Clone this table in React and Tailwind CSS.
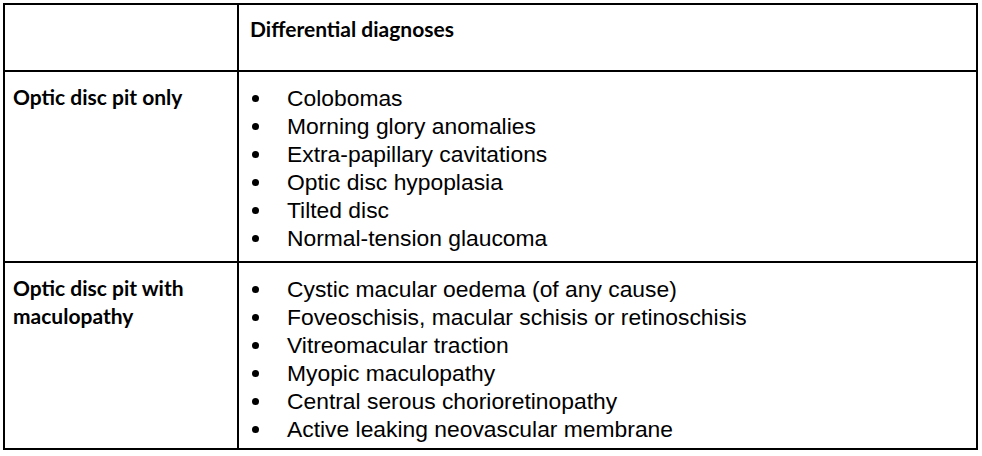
const rows = [
  {
    label: ["Optic disc pit only"],
    items: [
      "Colobomas",
      "Morning glory anomalies",
      "Extra-papillary cavitations",
      "Optic disc hypoplasia",
      "Tilted disc",
      "Normal-tension glaucoma",
    ],
    height: "h-[191px] border-b-2",
  },
  {
    label: ["Optic disc pit with", "maculopathy"],
    items: [
      "Cystic macular oedema (of any cause)",
      "Foveoschisis, macular schisis or retinoschisis",
      "Vitreomacular traction",
      "Myopic maculopathy",
      "Central serous chorioretinopathy",
      "Active leaking neovascular membrane",
    ],
    height: "h-[185px]",
  },
];

function BulletList({ items }) {
  return (
    <ul className="pt-[12px] font-['Liberation_Sans',Arial,sans-serif] text-[22.85px] leading-[28px] text-black">
      {items.map((item) => (
        <li key={item} className="flex items-center">
          <span className="flex w-[48px] pl-[13px]">
            <span className="h-[7px] w-[7px] rounded-full bg-black" />
          </span>
          <span>{item}</span>
        </li>
      ))}
    </ul>
  );
}

export default function App() {
  return (
    <div className="h-[456px] w-[982px] bg-white pl-[3px] pt-[3px]">
      <div className="w-[975px] border-2 border-black font-['Lato','Liberation_Sans',sans-serif]">
        <div className="flex h-[67px] border-b-2 border-black">
          <div className="w-[234px] border-r-2 border-black" />
          <div className="flex-1 pl-[11px] pt-[10px] text-[21px] font-bold leading-[28px] text-black">
            Differential diagnoses
          </div>
        </div>
        {rows.map((row) => (
          <div key={row.label[0]} className={`flex border-black ${row.height}`}>
            <div className="w-[234px] border-r-2 border-black pl-[8px] pt-[11px] text-[21px] font-bold leading-[28px] text-black">
              {row.label.map((l) => (
                <div key={l}>{l}</div>
              ))}
            </div>
            <div className="flex-1">
              <BulletList items={row.items} />
            </div>
          </div>
        ))}
      </div>
    </div>
  );
}
